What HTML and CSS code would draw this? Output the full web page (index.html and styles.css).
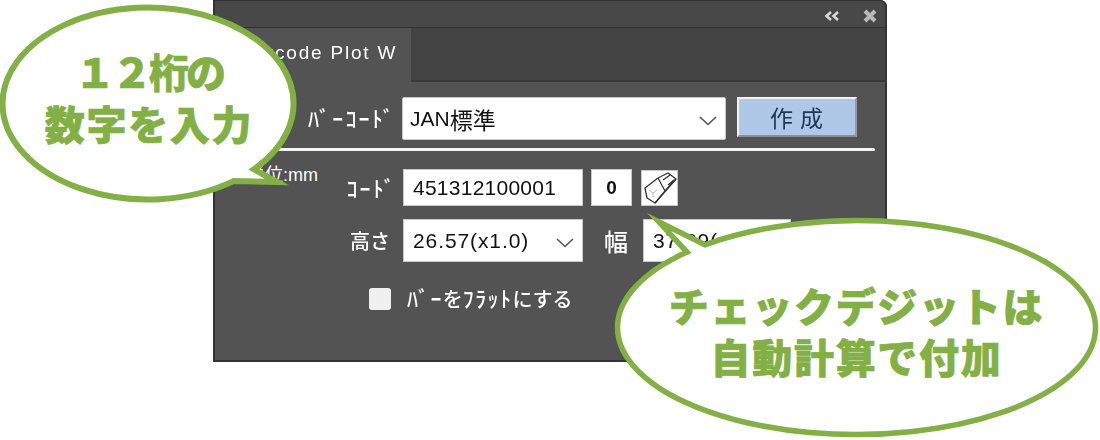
FILE: index.html
```html
<!DOCTYPE html>
<html lang="ja">
<head>
<meta charset="utf-8">
<title>Barcode Plot W</title>
<link rel="stylesheet" href="styles.css">
</head>
<body>
<div class="stage">
  <section class="panel">
    <header class="titlebar">
      <svg class="collapse" viewBox="0 0 16 10" width="16" height="10"><path d="M7 1 2.500 5 7 9M14 1 9.500 5 14 9"/></svg>
      <svg class="close" viewBox="0 0 14 14" width="14" height="14"><path d="M2 2l10 10M12 2 2 12"/></svg>
    </header>
    <nav class="tabs"><div class="tab">Barcode Plot W</div></nav>
    <div class="content">
      <div class="row top">
        <label class="lbl lbl-main">ﾊﾞｰｺｰﾄﾞ</label>
        <div class="field field-type">JAN<span class="cjk">標準</span>
          <svg class="chev" viewBox="0 0 18 10" width="18" height="10"><path d="M1 1l8 7.500 8-7.500"/></svg>
        </div>
        <button class="create">作 成</button>
      </div>
      <div class="rule"></div>
      <div class="row code">
        <div class="unit">単位:mm</div>
        <label class="lbl lbl-code">ｺｰﾄﾞ</label>
        <div class="field field-code">451312100001</div>
        <div class="field field-check">0</div>
        <div class="eraser">
          <svg viewBox="0 0 36 36" width="36" height="36">
            <path class="er" d="M4 18 17 8 27 3 35 9 14 33 6 28Z"/>
            <path class="er" d="M17 8 24 21 14 33M24 21 35 9M22 10 29 5M27 15 33 10"/>
            <path class="er2" d="M8 20l4 3 4-3M12 23v4"/>
          </svg>
        </div>
      </div>
      <div class="row size">
        <label class="lbl-plain lbl-height">高さ</label>
        <div class="field field-select">26.57(x1.0)
          <svg class="chev" viewBox="0 0 18 10" width="18" height="10"><path d="M1 1l8 7.500 8-7.500"/></svg>
        </div>
        <label class="lbl-plain lbl-width">幅</label>
        <div class="field field-select2">37.89(x1.0)</div>
      </div>
      <div class="row flat">
        <span class="checkbox"></span>
        <label class="lbl-flat"><span class="hw">ﾊﾞｰ</span>を<span class="hw">ﾌﾗｯﾄ</span>にする</label>
      </div>
    </div>
  </section>

  <svg class="bubble-art" viewBox="0 0 1100 440" width="1100" height="440">
    <path class="bubble bubble-one" d="M234 180.900A145.500 96 0 0 1 2.500 103.500A145.500 96 0 1 1 254 169.300L277 182Z"/>
    <path class="bubble" d="M687 252.100A239 107 0 0 0 617.500 327.500A239 107 0 1 0 705 244.800L659 222Z"/>
  </svg>
  <p class="say say-one"><span class="tight">１２桁の</span><br>数字を入力</p>
  <p class="say say-two">チェックデジットは<br>自動計算で付加</p>
</div>
</body>
</html>
```
FILE: styles.css
```css
* { box-sizing: border-box; }
html, body { margin: 0; padding: 0; background: #fff; }
.stage { position: relative; width: 1100px; height: 440px; overflow: hidden; }

.panel {
  margin-left: 213px;
  width: 674px;
  height: 362px;
  background: #535353;
  box-shadow: inset 0 0 0 2px #333;
  border-radius: 0 7px 0 0;
  display: flex;
  flex-direction: column;
  color: #fff;
  font-family: "Noto Sans CJK JP", "Liberation Sans", sans-serif;
}
.titlebar {
  height: 28px;
  flex: none;
  background: #484848;
  border: 2px solid #333;
  border-width: 1px 2px 1px 2px;
  border-radius: 0 7px 0 0;
  display: flex;
  justify-content: flex-end;
  align-items: center;
  gap: 23px;
  padding: 3px 8px 0 0;
}
.collapse path { fill: none; stroke: #d8d8d8; stroke-width: 2.600; }
.close path { fill: none; stroke: #b8b8b8; stroke-width: 4; }
.tabs {
  height: 54px;
  flex: none;
  background: #434343;
  border-bottom: 2px solid #3a3a3a;
  box-shadow: inset -2px 0 0 #333, inset 2px 0 0 #333;
  padding-left: 27px;
  display: flex;
}
.tab {
  width: 171px;
  height: 54px;
  background: #535353;
  font-family: "Liberation Sans", sans-serif;
  font-size: 19px;
  letter-spacing: 1.800px;
  line-height: 50px;
  white-space: nowrap;
  filter: blur(.3px);
}
.content { padding-top: 15px; flex: 1; box-shadow: inset -2px 0 0 #333, inset 2px 0 0 #333; }
.row { display: flex; align-items: center; }

.lbl { font-size: 22px; font-weight: 500; text-align: right; letter-spacing: 2.200px; white-space: nowrap; filter: blur(.3px); }
.lbl-plain { font-weight: 500; text-align: right; white-space: nowrap; filter: blur(.3px); }
.field {
  position: relative;
  background: #fff;
  color: #111;
  font-family: "Liberation Sans", "Noto Sans CJK JP", sans-serif;
  font-size: 21px;
  display: flex;
  align-items: center;
  border: 1px solid #c8c8c8;
  filter: blur(.25px);
}
.cjk { font-family: "Noto Sans CJK JP", sans-serif; font-size: 23px; }
.chev { position: absolute; right: 8px; top: 50%; margin-top: -3px; }
.chev path { fill: none; stroke: #555; stroke-width: 1.600; }

.top { align-items: flex-start; }
.lbl-main { width: 183px; line-height: 40px; margin-right: 6px; }
.field-type { width: 324px; height: 43px; padding-left: 7px; border-radius: 2px; }
.create {
  width: 120px;
  height: 40px;
  margin-left: 11px;
  padding: 0;
  background: #b0c8e8;
  border: 2px solid;
  border-color: #f2f2f2 #9a9a9a #8e8e8e #f2f2f2;
  color: #1d3557;
  font: 23px/1 "Noto Sans CJK JP", sans-serif;
  letter-spacing: 1px;
  filter: blur(.3px);
}
.rule { height: 3px; margin: 8px 12px 0 12px; background: #f4f4f4; border-radius: 2px; }

.code { margin-top: 18px; align-items: flex-start; }
.unit {
  width: 105px;
  font: 18px/1 "Liberation Sans", "Noto Sans CJK JP", sans-serif;
  text-align: right;
  margin-top: -3px;
}
.lbl-code { width: 79px; line-height: 36px; margin-right: 6px; }
.field-code { width: 180px; height: 37px; padding-left: 9px; letter-spacing: .25px; }
.field-check { width: 41px; height: 37px; margin-left: 8px; justify-content: center; font-weight: bold; font-size: 19px; }
.eraser { width: 37px; height: 36px; margin-left: 9px; margin-top: 1px; background: #fff; border: 1px solid #c8c8c8; filter: blur(.3px); }
.eraser svg { display: block; margin: -1px; }
.er { fill: none; stroke: #333; stroke-width: 1.300; stroke-linejoin: round; }
.er2 { fill: none; stroke: #bbb; stroke-width: 1; }

.size { margin-top: 13px; }
.lbl-height { width: 177px; margin-right: 13px; font-size: 20px; }
.field-select { width: 180px; height: 43px; padding-left: 9px; letter-spacing: .9px; }
.lbl-width { width: 45px; margin-right: 15px; font-size: 24px; }
.field-select2 { width: 148px; height: 43px; padding-left: 9px; letter-spacing: .9px; }

.flat { margin-top: 22px; margin-left: 156px; }
.checkbox { width: 22px; height: 22px; background: #f0f0f0; border-radius: 3px; }
.lbl-flat { margin: -3px 0 0 16px; font-size: 20px; font-weight: 500; white-space: nowrap; filter: blur(.3px); }
.hw { font-size: 22px; letter-spacing: 1.400px; }

.bubble-art { position: absolute; left: 0; top: 0; }
.bubble { fill: #fff; stroke: #82b044; stroke-width: 5.500; stroke-linejoin: miter; stroke-miterlimit: 12; }
.bubble-one { stroke-width: 6; }
.say {
  position: absolute;
  margin: 0;
  color: #82b044;
  -webkit-text-stroke: .7px #82b044;
  font-family: "Noto Sans CJK JP", sans-serif;
  font-weight: 900;
  font-size: 40px;
  letter-spacing: 1.700px;
  text-align: center;
  white-space: nowrap;
}
.tight { letter-spacing: -3px; }
.say-one { left: 0; width: 298px; top: 45px; line-height: 52px; }
.say-two { left: 615px; width: 483px; top: 280px; line-height: 51px; }
```
